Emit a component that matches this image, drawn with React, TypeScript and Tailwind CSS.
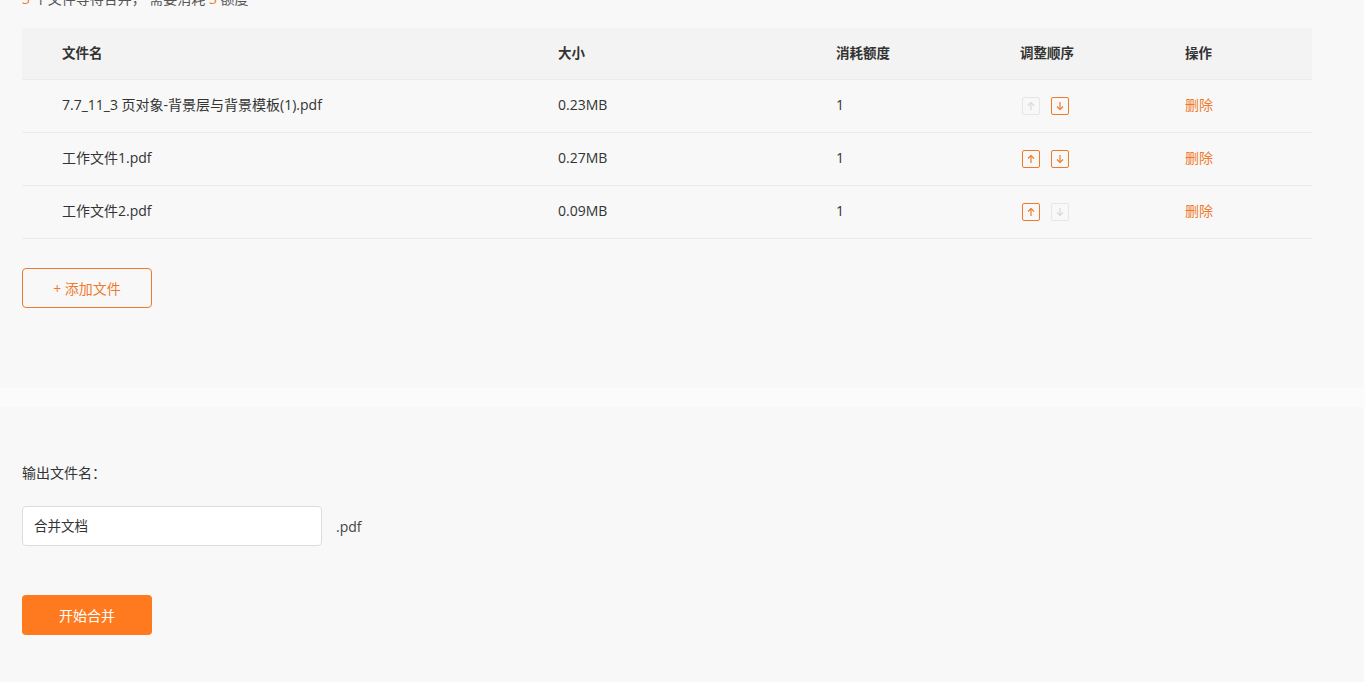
const font = { fontFamily: '"Open Sans", "Noto Sans CJK SC", sans-serif' }

interface FileRow {
  name: string
  size: string
  cost: number
  canUp: boolean
  canDown: boolean
}

const files: FileRow[] = [
  { name: '7.7_11_3 页对象-背景层与背景模板(1).pdf', size: '0.23MB', cost: 1, canUp: false, canDown: true },
  { name: '工作文件1.pdf', size: '0.27MB', cost: 1, canUp: true, canDown: true },
  { name: '工作文件2.pdf', size: '0.09MB', cost: 1, canUp: true, canDown: false },
]

function ArrowBox({ dir, active }: { dir: 'up' | 'down'; active: boolean }) {
  return (
    <span
      className={
        active
          ? 'flex h-[18px] w-[18px] items-center justify-center rounded-[2px] border border-[#f07a2c] text-[#f07a2c]'
          : 'flex h-[18px] w-[18px] items-center justify-center rounded-[2px] border border-[#e6e6e6] text-[#d8d8d8]'
      }
    >
      <svg width="10" height="10" viewBox="0 0 10 10" fill="none" stroke="currentColor" strokeWidth="1.2">
        {dir === 'up' ? (
          <>
            <path d="M5 9V1.5" />
            <path d="M2 4.5L5 1.5L8 4.5" />
          </>
        ) : (
          <>
            <path d="M5 1V8.5" />
            <path d="M2 5.5L5 8.5L8 5.5" />
          </>
        )}
      </svg>
    </span>
  )
}

export default function App() {
  return (
    <div className="min-h-screen bg-[#fbfbfb] text-[#333]" style={font}>
      {/* Liste des fichiers */}
      <div className="w-[1363px] bg-[#f8f8f8] px-[22px] pb-[80px]">
        <div className="-mt-[11px] text-[14px] leading-[20px] text-[#555]">
          <span className="text-[#f07a2c]">3</span> 个文件等待合并， 需要消耗 <span className="text-[#f07a2c]">3</span> 额度
        </div>

        <div className="mt-[19px] w-[1290px]">
          <div className="flex h-[52px] items-center border-b border-[#ececec] bg-[#f3f3f3] text-[13.5px] font-bold text-[#333]">
            <div className="w-[536px] pl-[40px]">文件名</div>
            <div className="w-[278px]">大小</div>
            <div className="w-[184px]">消耗额度</div>
            <div className="w-[165px]">调整顺序</div>
            <div>操作</div>
          </div>
          {files.map((f) => (
            <div key={f.name} className="flex h-[53px] items-center border-b border-[#ececec] pb-[3px] text-[14px] text-[#333]">
              <div className="w-[536px] pl-[40px]">{f.name}</div>
              <div className="w-[278px]">{f.size}</div>
              <div className="w-[184px]">{f.cost}</div>
              <div className="flex w-[165px] gap-[11px] pl-[2px] pt-[3px]">
                <ArrowBox dir="up" active={f.canUp} />
                <ArrowBox dir="down" active={f.canDown} />
              </div>
              <div className="text-[14px] text-[#f07a2c]">删除</div>
            </div>
          ))}
        </div>

        <button className="mt-[29px] flex h-[40px] w-[130px] items-center justify-center rounded-[4px] border border-[#f07a2c] text-[14px] text-[#f07a2c]">
          + 添加文件
        </button>
      </div>

      {/* Nom du fichier de sortie */}
      <div className="mt-[19px] w-[1363px] bg-[#f8f8f8] px-[22px] pt-[56px] pb-[47px]">
        <div className="text-[14px] leading-[20px] text-[#333]">输出文件名：</div>
        <div className="mt-[23px] flex items-center">
          <div className="flex h-[40px] w-[300px] items-center rounded-[4px] border border-[#dddddd] bg-white px-[11px] text-[13.5px] text-[#333]">
            合并文档
          </div>
          <span className="ml-[14px] text-[14px] text-[#444]">.pdf</span>
        </div>
        <button className="mt-[49px] flex h-[40px] w-[130px] items-center justify-center rounded-[4px] bg-[#ff7a1f] text-[14px] text-white">
          开始合并
        </button>
      </div>
    </div>
  )
}
